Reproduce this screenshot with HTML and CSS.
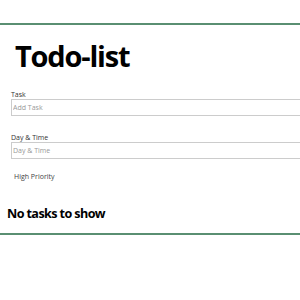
FILE: index.html
```html
<!DOCTYPE html>
<html lang="en">
  <head>
    <meta charset="UTF-8" />
    <title>Todo-list</title>
    <link rel="stylesheet" href="styles.css">
  </head>
  <body>
    <div class="container">
      <h1>Todo-list</h1>

      <form class="add-form">
        <div class="form-control">
          <label for="task">Task</label>
          <input type="text" id="task" placeholder="Add Task" />
        </div>
        <div class="form-control">
          <label for="day">Day &amp; Time</label>
          <input type="text" id="day" placeholder="Day &amp; Time" />
        </div>
        <div class="form-check">
          <label>High Priority</label>
        </div>
      </form>

      <h3 class="empty">No tasks to show</h3>
    </div>
  </body>
</html>
```

FILE: styles.css
```css
body {
  font-family: "Open Sans", sans-serif;
  margin: 0;
  padding: 0;
  background-color: #fff;
}

.container {
  margin-top: 23px;
  border-top: 2px solid #5a8f72;
  border-bottom: 2px solid #5a8f72;
  padding: 13px 0 11px 7px;
}

h1 {
  font-size: 29px;
  line-height: 35px;
  letter-spacing: -1.2px;
  margin: 0 0 17px 8px;
}

.form-control {
  margin: 0 0 17px 4px;
}

.form-control label {
  display: block;
  font-size: 7px;
  line-height: 9px;
  color: #333;
}

.form-control input {
  display: block;
  width: 100%;
  box-sizing: border-box;
  height: 17px;
  margin: 0;
  padding: 0 1px;
  border: 1px solid #ccc;
  border-right: none;
  font-family: "Open Sans", sans-serif;
  font-size: 7px;
}

.form-control input::placeholder {
  color: #999;
}

.form-check {
  margin: -4px 0 25px 7px;
  font-size: 7px;
  line-height: 9px;
  color: #444;
}

.empty {
  font-size: 12.6px;
  line-height: 16px;
  letter-spacing: -0.6px;
  margin: 0;
}
```
